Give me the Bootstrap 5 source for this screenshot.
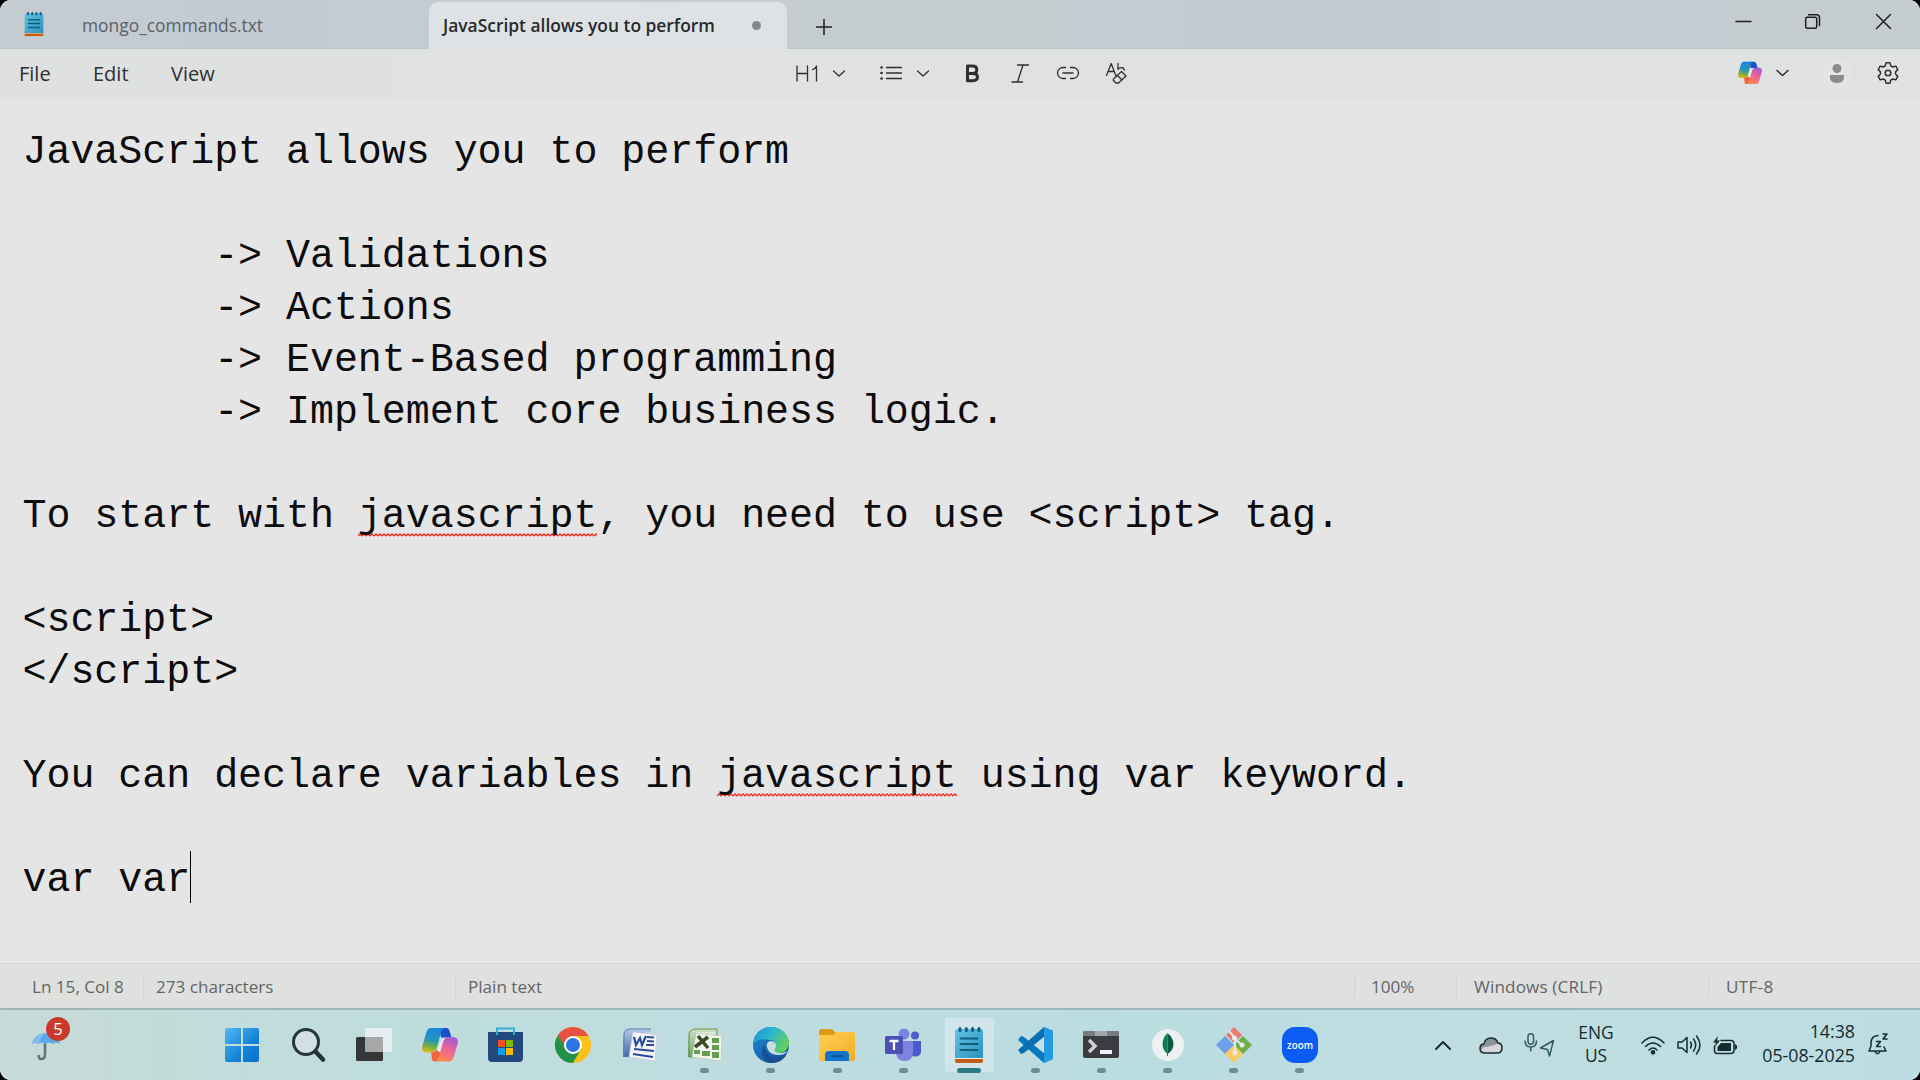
<!DOCTYPE html>
<html lang="en">
<head>
<meta charset="utf-8">
<title>Notepad</title>
<link href="https://cdn.jsdelivr.net/npm/bootstrap@5.3.0/dist/css/bootstrap.min.css" rel="stylesheet">
<style>
html,body{width:1920px;height:1080px;overflow:hidden;background:#000}
body{font-family:"Open Sans","Noto Sans",sans-serif;color:#1d2022}
svg{display:block;flex:none;overflow:visible}
.desk{width:1920px;height:1080px;border-radius:11px;background:#e5e5e5}
.titlebar{height:49px;background:linear-gradient(90deg,#c4cbd1,#c3cbd4 30%,#c5cdce 45%,#c2cbd4 70%,#c6cdd0);box-shadow:inset 0 -1px #bcc4c8}
.tab-idle{width:429px;padding:2px 0 0 32px;color:#5b6167;font-size:17.4px}
.tab-live{width:358px;height:47px;margin-top:2px;padding-left:14px;background:#dfe2e5;border-radius:9px 9px 0 0;font-size:17.4px;font-weight:600;color:#26292c}
.tab-live i{width:9px;height:9px;border-radius:50%;background:#858789}
.toolbar{height:50px;background:linear-gradient(90deg,#dfe1e0,#dfe1e2 35%,#e0e1e3);border-bottom:1px solid #dcdedf;font-size:20px;color:#2d2f30}
.menus{width:796px;padding-top:1px}
.paper{height:864px;background:#e5e5e5;padding:28px 0 0 22.5px}
.paper pre{font:40px/52.03px "Liberation Mono",monospace;letter-spacing:-.05px;color:#0c0c0e;margin:0;tab-size:8;overflow:visible}
.typo{background:url("data:image/svg+xml,%3Csvg xmlns='http://www.w3.org/2000/svg' width='4' height='4'%3E%3Cpath d='M0 3L2 1L4 3' fill='none' stroke='%23ee2d20' stroke-width='1.3'/%3E%3C/svg%3E") 0 39px repeat-x}
.caret{left:0;top:-7px;width:1.3px;height:52px;background:#000}
.status{height:45px;background:linear-gradient(90deg,#dfe1df,#dfe0e0);border-top:1px solid #d2d4d4;font-size:17.1px;color:#626566}
.status>div{border-left:1px solid #d0d3d3;height:24px;line-height:26px;margin-top:-1px;white-space:nowrap}
.status>div:first-child{border:0}
.task{height:72px;border-top:2px solid #9cb5b8;background:linear-gradient(90deg,#c6dbd7 0,#c0dcdb 14%,#bfdce0 35%,#badde0 60%,#c0dde1 78%,#bbdde1)}
.weather{width:209px;padding:2px 0 0 30px}
.count{left:16px;top:-14px;width:24px;height:24px;border-radius:50%;background:#c93a2a;color:#fff;font-size:16.5px;line-height:24px}
.app{width:66.12px;height:70px;padding-top:17px}
.app svg{width:36px;height:36px}
.app b{width:9px;height:5px;border-radius:3px;background:#6c8f93;margin-top:5px}
.app.on{background:linear-gradient(#d3e5ec,#d1e4ea) center 8px/49px 54px no-repeat}
.app.on b{width:24px;background:#2d7b80}
.tray{font-size:17.8px;line-height:25px;color:#152b30}
.ln{fill:none;stroke:currentColor;stroke-width:1.5;stroke-linecap:round;stroke-linejoin:round}
</style>
</head>
<body>
<svg width="0" height="0" class="position-absolute">
<defs>
<linearGradient id="cpA" x1=".3" y1="0" x2=".1" y2="1"><stop offset="0" stop-color="#1b87dc"/><stop offset=".45" stop-color="#2496b8"/><stop offset=".72" stop-color="#79ad43"/><stop offset="1" stop-color="#e8c010"/></linearGradient>
<linearGradient id="cpB" x1=".7" y1="0" x2=".3" y2="1"><stop offset="0" stop-color="#a65ad8"/><stop offset=".45" stop-color="#e9639a"/><stop offset="1" stop-color="#ff8a4a"/></linearGradient>
<linearGradient id="np" x1="0" y1="0" x2="1" y2="1"><stop offset="0" stop-color="#63c3e6"/><stop offset="1" stop-color="#2b92bd"/></linearGradient>
<linearGradient id="wn" x1="0" y1="0" x2="1" y2="1"><stop offset="0" stop-color="#50b8f2"/><stop offset=".6" stop-color="#1583d8"/><stop offset="1" stop-color="#0a6fcb"/></linearGradient>
<linearGradient id="edG" x1="0" y1="0" x2="1" y2=".5"><stop offset="0" stop-color="#1f8fcb"/><stop offset=".5" stop-color="#2bb6cf"/><stop offset="1" stop-color="#62cf5a"/></linearGradient>
<linearGradient id="edB" x1="0" y1="0" x2="1" y2="1"><stop offset="0" stop-color="#1b8bd5"/><stop offset="1" stop-color="#114b93"/></linearGradient>
<linearGradient id="fo" x1="0" y1="0" x2="1" y2="1"><stop offset="0" stop-color="#ffcf55"/><stop offset="1" stop-color="#f3ae25"/></linearGradient>
<linearGradient id="wd" x1="0" y1="0" x2="0" y2="1"><stop offset="0" stop-color="#b9cce6"/><stop offset="1" stop-color="#3d68ae"/></linearGradient>
<linearGradient id="xl" x1="0" y1="0" x2="0" y2="1"><stop offset="0" stop-color="#d2e2cb"/><stop offset="1" stop-color="#6d9f5d"/></linearGradient>
<symbol id="copilot" viewBox="0 0 36 36">
<path d="M17 1h7c2.300 0 3.300 1.500 3.800 4l1.700 5.500H19z" fill="#1d4fc4"/>
<path d="M20 12l5-1-6 18-5-4z" fill="#e6edf0"/>
<path d="M9 1H22.500c-2 .6-2.800 2-3.400 4L15 20.500c-.9 3.200-2.600 5-5.500 5H4.500C.5 25.500-.6 22.500.4 19L4.200 5.500C5 2.500 6.500 1 9 1z" fill="url(#cpA)"/>
<path d="M27 34.500H13c2-.6 3-2 3.600-4L21 15c.9-3.200 2.600-4.800 5.500-4.800h5c4 0 5.100 3 4.100 6.500L31.700 30c-.8 2.900-2.200 4.500-4.700 4.500z" fill="url(#cpB)"/>
<path d="M9 25.500c3 0 4.500-1.500 6-2.500l3.500 3-2 5c-.6 2-1.500 3.500-4 3.500-3 0-2.500-4-3.500-9z" fill="#f2653b"/>
</symbol>
<symbol id="pad" viewBox="0 0 36 36">
<path d="M4 29h28v5q0 2-2 2H6q-2 0-2-2z" fill="#c55c14"/><path d="M4 29h28v3H4z" fill="#eee"/>
<path d="M4 5q0-3 3-3h22q3 0 3 3v26H4z" fill="url(#np)"/>
<path d="M9 1.500v2M15.300 1.500v2M21.600 1.500v2M28 1.500v2" stroke="#155e78" stroke-width="3" stroke-linecap="round"/>
<path d="M9.500 11.500h17M9.500 17h17M9.500 23h17" stroke="#125d80" stroke-width="2" stroke-linecap="round"/>
</symbol>
</defs></svg>
<div class="desk d-flex flex-column overflow-hidden">

<header class="titlebar d-flex align-items-center">
  <svg class="ms-4" width="20" height="25" viewBox="3 0 30 37" preserveAspectRatio="none"><use href="#pad" width="36" height="36"/></svg>
  <div class="tab-idle" style="margin-left:6px">mongo_commands.txt</div>
  <div class="tab-live d-flex align-items-center" style="margin-left:-50px"><span class="text-nowrap" style="width:309px">JavaScript allows you to perform</span><i></i></div>
  <svg style="margin-left:29px;margin-top:4px" width="16" height="16" class="ln"><path d="M8 .5v15M.5 8h15"/></svg>
  <div class="d-flex ms-auto align-items-center" style="padding-right:29px;margin-top:-6px">
    <svg class="ln" width="15" height="15"><path d="M0 7.500h15"/></svg>
    <svg class="ln" style="margin-left:54px" width="15" height="15"><rect x=".7" y="3.200" width="11" height="11" rx="1.500"/><path d="M3.500.8h8q3 0 3 3v7.700"/></svg>
    <svg class="ln" style="margin-left:56px" width="15" height="15"><path d="M.5.5l14 14M14.500.5l-14 14"/></svg>
  </div>
</header>

<nav class="toolbar d-flex align-items-center flex-shrink-0">
  <div class="menus d-flex"><span style="padding-left:19px;width:93px">File</span><span style="width:78px">Edit</span><span>View</span></div>
  <svg width="350" height="26" viewBox="796.500 61 350 26" class="ln" style="stroke-width:1.300">
    <path d="M797.500 66v15M808 66v15M797.500 73.500H808M813 69.500q3-1 4-3.500v15M834 71l5.500 5 5.500-5M918 71l5.500 5 5.500-5"/>
    <path d="M887 67.500h15M887 73h15M887 78.500h15"/><path d="M882 67.500h.1M882 73h.1M882 78.500h.1" stroke-width="2.600"/>
    <path d="M968 66h5q4.300 0 4.300 3.700t-4.300 3.700h-5zM968 73.500h5.500q4.500 0 4.500 3.600t-4.500 3.600H968z" stroke-width="3"/>
    <path d="M1018 65h11M1012.500 82h10.500M1023.500 65l-5.500 17"/>
    <path d="M1066 67.500h-2.500a5.500 5.500 0 0 0 0 11h2.500M1071 67.500h2.500a5.500 5.500 0 0 1 0 11h-2.500M1063.500 73h10"/>
    <path d="M1107 75.500l4.700-12 4.600 12M1108.500 71.500h6.200M1118.500 63.500v6M1118.500 69q5-3 6.500 1M1114.500 78.500l7.500-7 4.500 4.500-7.500 7h-2.500l-3-3zM1118 75.500l4.500 4.500"/>
  </svg>
  <div class="d-flex align-items-center" style="margin-left:592px;margin-top:-2px">
    <svg width="24" height="24"><use href="#copilot" width="24" height="24"/></svg>
    <svg class="ln" style="margin-left:15px" width="11" height="6"><path d="M0 .5l5.500 5L11 .5"/></svg>
    <svg style="margin-left:34px" width="30" height="30" viewBox="0 0 30 30"><circle cx="15" cy="15" r="15" fill="#e3e4e4"/><g fill="#8b8b8b"><circle cx="15" cy="10.500" r="4.500"/><path d="M8 17h14q1 8-7 8t-7-8z"/></g></svg>
    <svg class="ln" style="margin-left:25px" width="22" height="22" viewBox="0 0 22 22"><circle cx="11" cy="11" r="2.800"/><path d="M9 .8h4l.7 3 2.100 1.200 3-.9 2 3.500-2.200 2.100v2.600l2.200 2.100-2 3.500-3-.9-2.100 1.200-.7 3H9l-.7-3L6.200 17l-3 .9-2-3.500 2.200-2.100V9.700L1.200 7.600l2-3.500 3 .9 2.100-1.200z"/></svg>
  </div>
</nav>

<main class="paper flex-shrink-0"><pre>JavaScript allows you to perform

	-&gt; Validations
	-&gt; Actions
	-&gt; Event-Based programming
	-&gt; Implement core business logic.

To start with <span class="typo">javascript</span>, you need to use &lt;script&gt; tag.

&lt;script&gt;
&lt;/script&gt;

You can declare variables in <span class="typo">javascript</span> using var keyword.

var var<span class="position-relative"><span class="caret position-absolute"></span></span></pre></main>

<footer class="status d-flex align-items-center flex-shrink-0">
  <div style="width:143px;padding-left:32px">Ln 15, Col 8</div>
  <div style="width:312px;padding-left:12px">273 characters</div>
  <div style="width:899px;padding-left:12px">Plain text</div>
  <div style="width:102px;padding-left:16px">100%</div>
  <div style="width:252px;padding-left:17px;letter-spacing:.15px">Windows (CRLF)</div>
  <div style="padding-left:17px;letter-spacing:.3px">UTF-8</div>
</footer>

<div class="task d-flex flex-shrink-0">
  <div class="weather d-flex align-items-center"><div class="position-relative">
    <svg width="32" height="30" viewBox="0 0 32 30"><path d="M15 5v18q0 5-3.500 5T9 24" fill="none" stroke="#5f7779" stroke-width="2.600"/><path d="M2 13Q4 3 15.500 2 28 3 30 13q-4-2.500-7 0-4-2.500-7.500 0-4-2.500-7 0Q5 11 2 13z" fill="#5fa9ea"/><path d="M9 13q1-8 6.500-11-9 1-13.500 11 3-2 7 0z" fill="#84bdf0"/></svg>
    <span class="count position-absolute text-center">5</span></div></div>

  <div class="app d-flex flex-column align-items-center"><svg viewBox="0 0 36 36"><g fill="url(#wn)"><path d="M1 3q0-2 2-2h14v16H1zM19 1h14q2 0 2 2v14H19zM1 19h16v16H3q-2 0-2-2zM19 19h16v14q0 2-2 2H19z"/></g></svg></div>
  <div class="app d-flex flex-column align-items-center"><svg viewBox="0 0 36 36"><path d="M25 24l8 8.500" stroke="#24343a" stroke-width="4.500" stroke-linecap="round"/><circle cx="16" cy="15" r="12.500" fill="#d3dfe5" stroke="#25363c" stroke-width="3"/></svg></div>
  <div class="app d-flex flex-column align-items-center"><svg viewBox="0 0 36 36"><rect x="0" y="10" width="27" height="24" rx="1.500" fill="#343638"/><rect x="9" y="1" width="27" height="24" rx="1.500" fill="#f0f2f3" fill-opacity=".78"/><path d="M9 10h18v15H9z" fill="#8f9192" fill-opacity=".6"/></svg></div>
  <div class="app d-flex flex-column align-items-center"><svg><use href="#copilot"/></svg></div>
  <div class="app d-flex flex-column align-items-center"><svg viewBox="0 0 36 36"><path d="M0 5h35v26q0 4-4 4H4q-4 0-4-4z" fill="#22497e"/><path d="M9 8V1.500h17V8" fill="none" stroke="#35aed1" stroke-width="2"/><path fill="#f25022" d="M10 13h7v7h-7z"/><path fill="#7fba00" d="M18 13h7v7h-7z"/><path fill="#0aa0ee" d="M10 21h7v7h-7z"/><path fill="#ffb900" d="M18 21h7v7h-7z"/></svg></div>
  <div class="app d-flex flex-column align-items-center"><svg viewBox="0 0 36 36"><circle cx="18" cy="18" r="18" fill="#fbc116"/><path d="M2.400 9A18 18 0 0 0 18 36L25.800 22.500 10.200 22.500z" fill="#24914a"/><path d="M2.400 9l7.800 13.500 4-6L6 6z" fill="#24914a"/><path d="M3 8l5.500 9 9.500-8h15.600A18 18 0 0 0 3 8z" fill="#e8503f"/><circle cx="18" cy="18" r="9" fill="#fff"/><circle cx="18" cy="18" r="7" fill="#2c74e4"/></svg></div>
  <div class="app d-flex flex-column align-items-center"><svg viewBox="0 0 36 36"><path d="M2 30V8q0-7 7-7h21v29z" fill="url(#wd)"/><path d="M3 30V9q0-7 7-7h20" fill="none" stroke="#6783ae"/><path d="M10 15Q16 5 30 5v4H13z" fill="#dfe7f1" opacity=".7"/><path d="M12 5l24 3-2 26-26-4z" fill="#f4f5f9" stroke="#c8ccd8" stroke-width=".7"/><path d="M13 10l2 8 4-7 2 7 4-9M26 10l7 .5M26 14l7 .5M25 18h8M13 22l20 2M12 27l20 3" fill="none" stroke="#294c9c" stroke-width="2.200"/></svg></div>
  <div class="app d-flex flex-column align-items-center"><svg viewBox="0 0 36 36"><path d="M1 30V8q0-7 7-7h22v29z" fill="url(#xl)"/><path d="M2 30V9q0-7 7-7h21v28z" fill="none" stroke="#5e9850"/><path d="M9 5h19v3H11z" fill="#edf3e9" opacity=".7"/><path d="M9 6l26 3-1 25-29-4z" fill="#f2f5ec" stroke="#b9c8b2" stroke-width=".7"/><path d="M25 11h7v5h-7zM25 18h7v5h-7zM25 25h7v6h-7zM15 24h8v5h-8zM7 23h6v4H7z" fill="#669d50"/><path d="M11 9l10 12M21 10L8 20" stroke="#354c25" stroke-width="3.500"/></svg><b></b></div>
  <div class="app d-flex flex-column align-items-center"><svg viewBox="0 0 36 36"><circle cx="18" cy="18" r="18" fill="url(#edB)"/><path d="M0 17C1 6 9 0 18 0c11 0 18 8 18 16 0 6-5 10-10 10-4 0-5-2-4-4 3-4 0-9-5-9-7-2-14 0-17 4z" fill="url(#edG)"/><path d="M12 18c-1 8 5 13 12 13 4 0 7-1 9.500-3C30 33 25 36 19 36 10 36 6 23 12 18z" fill="#174f91"/><path d="M22 22c3-4 0-8-4-8-3 0-5 3-4 6 1 5 5 8 11 8 4 0 8-1 9-4-4 3-14 3-12-2z" fill="#c8dfe1"/></svg><b></b></div>
  <div class="app d-flex flex-column align-items-center"><svg viewBox="0 0 36 36"><path d="M0 4q0-2 2-2h11l4 4v4H0z" fill="#dd9b13"/><path d="M0 8h14l4-3h16q2 0 2 2v25q0 2-2 2H2q-2 0-2-2z" fill="url(#fo)"/><path d="M6 34v-6q0-4 4-4h16q4 0 4 4v6z" fill="#1275cc"/><path d="M12 29h12" stroke="#0a4b8d" stroke-width="1.600"/></svg><b></b></div>
  <div class="app d-flex flex-column align-items-center"><svg viewBox="0 0 36 36"><circle cx="19" cy="7" r="5.500" fill="#7b83e5"/><circle cx="30" cy="8.500" r="4" fill="#525bc7"/><path d="M25 14h11v12q-3 6-11 2z" fill="#5059c9"/><path d="M11 14h17v11q0 9-8 9-9 0-9-9z" fill="#7c84e0"/><rect y="9" width="18" height="18" rx="1.800" fill="#4b50b5"/><path d="M4.500 14h9M9 14v9" stroke="#fff" stroke-width="2.300"/></svg><b></b></div>
  <div class="app on d-flex flex-column align-items-center"><svg><use href="#pad"/></svg><b></b></div>
  <div class="app d-flex flex-column align-items-center"><svg viewBox="0 0 36 36"><path d="M27 0l9 4v28l-9 4L1 13l3-4 3 1 20 16z" fill="#0878bd"/><path d="M1 23l26-23v10L7 26l-3 1z" fill="#0b6eaf"/><path d="M27 0l9 4v28l-9 4z" fill="#249ce2"/><path d="M27 10v16l-10-8z" fill="#c6e0e5"/></svg><b></b></div>
  <div class="app d-flex flex-column align-items-center"><svg viewBox="0 0 36 36"><rect y="4" width="36" height="27" rx="2" fill="#3b3c3f"/><path d="M0 9V6q0-2 2-2h32q2 0 2 2v3z" fill="#797c7e"/><path d="M12 4h12v5H12z" fill="#a3a6a8"/><path d="M6 13l6 6-6 6" fill="none" stroke="#cdcfd0" stroke-width="3.500"/><path d="M17 25h12" stroke="#f1f1f1" stroke-width="4"/></svg><b></b></div>
  <div class="app d-flex flex-column align-items-center"><svg viewBox="0 0 36 36"><circle cx="18" cy="18" r="16" fill="#edf1f2"/><path d="M17.500 6q-5 5-5 11t5 10z" fill="#0f7b55"/><path d="M17.500 6q6 5 6 11t-6 10z" fill="#075b40"/><path d="M17.500 25v4" stroke="#46675e"/></svg><b></b></div>
  <div class="app d-flex flex-column align-items-center"><svg viewBox="0 0 36 36"><path d="M18 0l8 8-8 8-8-8z" fill="#ef7870"/><path d="M9 9l9 9-9 9-9-9z" fill="#6f9eea"/><path d="M27 9l9 9-9 9-9-9z" fill="#71ad4c"/><path d="M18 18l9 9-9 9-9-9z" fill="#f7cb5e"/><path d="M13 4l6 7v15M19 12l7 6" fill="none" stroke="#dde9e8" stroke-width="2"/><g fill="#e3edec"><circle cx="18.500" cy="11" r="2.500"/><circle cx="26" cy="18" r="2.500"/><circle cx="19" cy="26" r="2.500"/></g></svg><b></b></div>
  <div class="app d-flex flex-column align-items-center"><svg viewBox="0 0 36 36"><rect width="36" height="36" rx="13" fill="#0b5cf5"/><text x="18" y="21.500" text-anchor="middle" textLength="26" lengthAdjust="spacingAndGlyphs" font-family="Open Sans" font-weight="600" font-size="10.500" fill="#fff">zoom</text></svg><b></b></div>

  <div class="tray d-flex align-items-center ms-auto" style="padding-right:31px">
    <svg class="ln" width="16" height="9" style="stroke-width:2"><path d="M1 8l7-7 7 7"/></svg>
    <svg style="margin-left:28px" width="24" height="17" viewBox="0 0 24 17"><path d="M5 7Q6 1 12 1q5 0 7 5 4 0 4 5t-5 5H6q-5 0-5-4.500T5 7z" fill="#8e9398"/><path d="M2 14q2-5 6-4l10-3q5 0 5 4t-5 5H6q-3 0-4-2z" fill="#d4d6d7"/><path d="M5 7Q6 1 12 1q5 0 7 5 4 0 4 5t-5 5H6q-5 0-5-4.500T5 7z" class="ln"/></svg>
    <svg class="ln" style="margin-left:21px;color:#2f5b66" width="31" height="24" viewBox="0 0 31 24"><rect x="4" y=".8" width="5.500" height="10.500" rx="2.700"/><path d="M1 8q0 6 5.700 6T12.500 8M6.700 14v4M29.500 7.500l-13 7.500 7 1.500 2 6.500z"/></svg>
    <div class="text-center" style="width:36px;margin-left:23px;margin-top:-2px;line-height:23px;font-size:17.400px">ENG US</div>
    <svg class="ln" style="margin-left:27px" width="24" height="19" viewBox="0 0 24 19"><path d="M1 7Q12-4.500 23 7M4.500 10.500q7.500-7 15 0M8 14q4-4 8 0"/><circle cx="12" cy="16.300" r="1.600" fill="currentColor"/></svg>
    <svg class="ln" style="margin-left:12px" width="24" height="20" viewBox="0 0 24 20"><path d="M1 7v6h4l5 4.500v-15L5 7zM13.500 7q2 3 0 6M16.500 4q4.500 6 0 12M19.500 1q7 9 0 18"/></svg>
    <svg style="margin-left:12px" width="24" height="19" viewBox="0 0 24 19"><path class="ln" d="M8 4.500h10q3 0 3 3v7q0 3-3 3H4q-2.500 0-2.500-3V10"/><path d="M8 7h10v8H4.500v-4zM22 8l2 1.500v3L22 14zM5 0L0 6.500h3L1.500 11 7 4.500H4z" fill="currentColor"/></svg>
    <div class="text-end text-nowrap" style="width:94px;margin-left:24px;margin-top:-4px;line-height:24px"><div>14:38</div><div>05-08-2025</div></div>
    <svg class="ln" style="margin-left:13px;margin-top:-2px" width="21" height="22" viewBox="0 0 21 22"><path d="M10 2.500Q3 3 3 10v3l-2 5h17l-2-4M7 18.500q2.500 4.500 5 0M8.500 8.500h4l-4 5h4M15 1h4l-4 5h4"/></svg>
  </div>
</div>
</div>
<script src="https://cdn.jsdelivr.net/npm/bootstrap@5.3.0/dist/js/bootstrap.bundle.min.js"></script>
</body>
</html>
